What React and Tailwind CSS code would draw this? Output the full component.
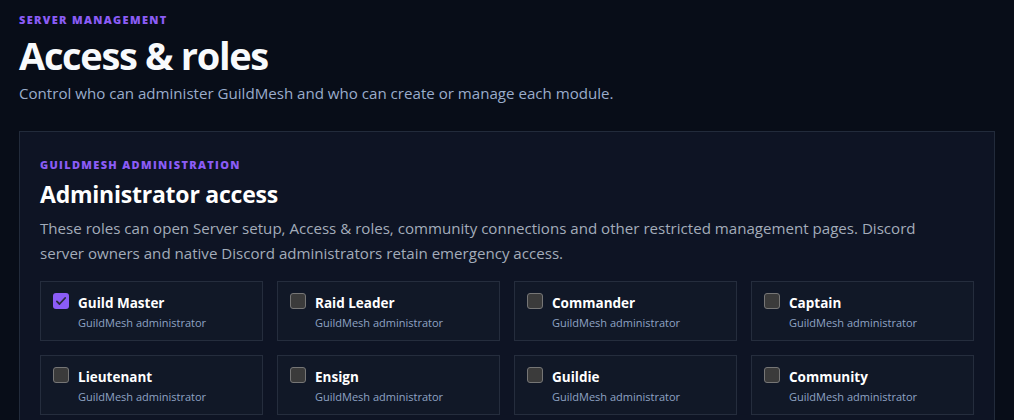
const roles = [
  { name: "Guild Master", checked: true },
  { name: "Raid Leader" },
  { name: "Commander" },
  { name: "Captain" },
  { name: "Lieutenant" },
  { name: "Ensign" },
  { name: "Guildie" },
  { name: "Community" },
];

function Box({ checked }) {
  if (checked) {
    return (
      <span className="flex items-center justify-center w-4 h-4 shrink-0 rounded-[3px] bg-[#8b5cf6]">
        <svg viewBox="0 0 16 16" className="w-3 h-3" fill="none">
          <path d="M2.5 8.5l3.5 3.5 7.5-8" stroke="#2a2a3a" strokeWidth="2.4" strokeLinecap="round" strokeLinejoin="round" />
        </svg>
      </span>
    );
  }
  return <span className="block w-4 h-4 shrink-0 rounded-[3px] border border-[#767676] bg-[#3b3b3b]" />;
}

function RoleCard({ name, checked }) {
  return (
    <label className="flex items-start gap-[9px] border border-[#252d3d] bg-[#111827] px-3 pt-[11px] h-[60px]">
      <Box checked={checked} />
      <div className="flex flex-col">
        <span className="text-[13.5px] leading-[18px] font-bold text-white mt-[1px]">{name}</span>
        <span className="text-[11px] leading-[16px] mt-[3px] text-[#8fa3c4]">GuildMesh administrator</span>
      </div>
    </label>
  );
}

export default function App() {
  return (
    <div
      className="min-h-[420px] bg-[#080d18] px-[19px] pt-[12px] overflow-hidden"
      style={{ fontFamily: '"Open Sans", "Noto Sans", sans-serif' }}
    >
      <div className="text-[11px] leading-4 font-extrabold tracking-[0.12em] text-[#8b5cf6]">
        SERVER MANAGEMENT
      </div>
      <h1 className="mt-[6px] text-[38px] leading-[42px] font-bold tracking-[-0.035em] text-[#f8fafc]">
        Access &amp; roles
      </h1>
      <p className="mt-[5px] text-[15.1px] leading-6 text-[#9aaccb]">
        Control who can administer GuildMesh and who can create or manage each module.
      </p>

      <section className="mt-[26px] w-[976px] border border-[#222b3b] bg-[#0e1424] px-5 pt-[25px] pb-5">
        <div className="text-[11px] leading-4 font-extrabold tracking-[0.12em] text-[#8b5cf6]">
          GUILDMESH ADMINISTRATION
        </div>
        <h2 className="mt-[5px] text-[23px] leading-8 font-bold tracking-[-0.01em] text-white">Administrator access</h2>
        <p className="mt-[6px] max-w-[900px] text-[15.1px] leading-[25px] text-[#a3acba]">
          These roles can open Server setup, Access &amp; roles, community connections and other restricted
          management pages. Discord server owners and native Discord administrators retain emergency access.
        </p>
        <div className="mt-[15px] grid grid-cols-4 gap-[14px]">
          {roles.map((r) => (
            <RoleCard key={r.name} {...r} />
          ))}
        </div>
      </section>
    </div>
  );
}
